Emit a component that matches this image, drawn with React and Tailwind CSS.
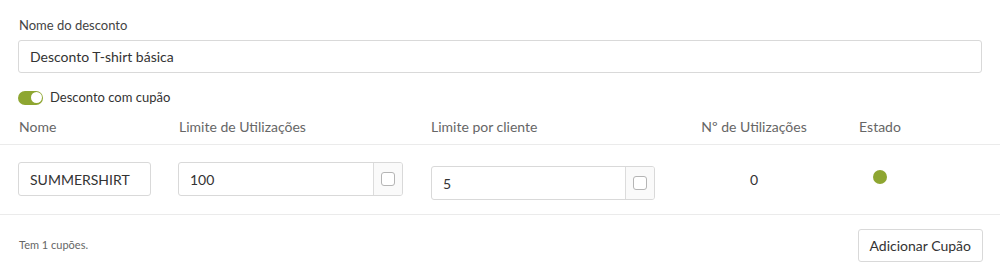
import React, { useState } from "react";

// Coupon discount editor
const CheckAddon = () => (
  <div className="flex w-[29px] shrink-0 items-center justify-center border-l border-[#dcdcdc] bg-[#fafafa]">
    <span className="block h-[14px] w-[14px] rounded-[3px] border border-[#b5b5b5] bg-white"></span>
  </div>
);

const coupons = [
  { id: 1, name: "SUMMERSHIRT", limit: "100", perClient: "5", used: 0, active: true },
];

export default function App() {
  const [withCoupon, setWithCoupon] = useState(true);

  return (
    <div className="h-[277px] w-[1000px] bg-white text-[#333] [font-family:Lato,'Liberation_Sans',sans-serif]">
      <div className="px-[18px] pt-[16px]">
        <label className="block pl-[1px] text-[13px] leading-[18px] text-[#444]">Nome do desconto</label>
        <div className="mt-[6px] flex h-[33px] items-center rounded-[3px] border border-[#d9d9d9] px-[11px] text-[14px]">
          Desconto T-shirt básica
        </div>

        <div className="mt-[18px] flex h-[13px] items-center gap-[7px]">
          <button
            onClick={() => setWithCoupon(!withCoupon)}
            className={`relative h-[14px] w-[25px] rounded-full ${withCoupon ? "bg-[#8ea631]" : "bg-[#ccc]"}`}
          >
            <span
              className={`absolute top-[1.5px] h-[11px] w-[11px] rounded-full bg-white ${withCoupon ? "right-[1.5px]" : "left-[1.5px]"}`}
            ></span>
          </button>
          <span className="text-[13px] text-[#333]">Desconto com cupão</span>
        </div>
      </div>

      {/* coupons table */}
      <div className="mt-[4px] grid h-[37px] grid-cols-[160px_253px_263px_120px_132px] items-center border-b border-[#ebebeb] px-[18px] text-[14px] text-[#666]">
        <div className="pl-[1px]">Nome</div>
        <div className="pl-[1px]">Limite de Utilizações</div>
        <div>Limite por cliente</div>
        <div className="text-center">Nº de Utilizações</div>
        <div className="text-center">Estado</div>
      </div>

      {coupons.map((c) => (
        <div
          key={c.id}
          className="grid h-[70px] grid-cols-[160px_253px_263px_120px_132px] border-b border-[#ebebeb] px-[18px] pt-[17px] text-[14px]"
        >
          <div>
            <div className="flex h-[34px] w-[133px] items-center rounded-[3px] border border-[#d9d9d9] px-[11px]">
              {c.name}
            </div>
          </div>
          <div>
            <div className="flex h-[34px] w-[225px] overflow-hidden rounded-[3px] border border-[#d9d9d9]">
              <div className="flex flex-1 items-center px-[11px]">{c.limit}</div>
              <CheckAddon />
            </div>
          </div>
          <div>
            <div className="mt-[4px] flex h-[34px] w-[224px] overflow-hidden rounded-[3px] border border-[#d9d9d9]">
              <div className="flex flex-1 items-center px-[11px]">{c.perClient}</div>
              <CheckAddon />
            </div>
          </div>
          <div className="flex h-[34px] items-center justify-center">{c.used}</div>
          <div className="flex h-[30px] items-center justify-center">
            <span className={`block h-[14px] w-[14px] rounded-full ${c.active ? "bg-[#8ea631]" : "bg-[#ccc]"}`}></span>
          </div>
        </div>
      ))}

      <div className="flex items-center justify-between pl-[19px] pr-[17px] pt-[14px]">
        <span className="text-[11px] text-[#666]">Tem {coupons.length} cupões.</span>
        <button className="h-[33px] rounded-[3px] border border-[#d9d9d9] bg-white px-[11px] text-[14px] text-[#333]">
          Adicionar Cupão
        </button>
      </div>
    </div>
  );
}
